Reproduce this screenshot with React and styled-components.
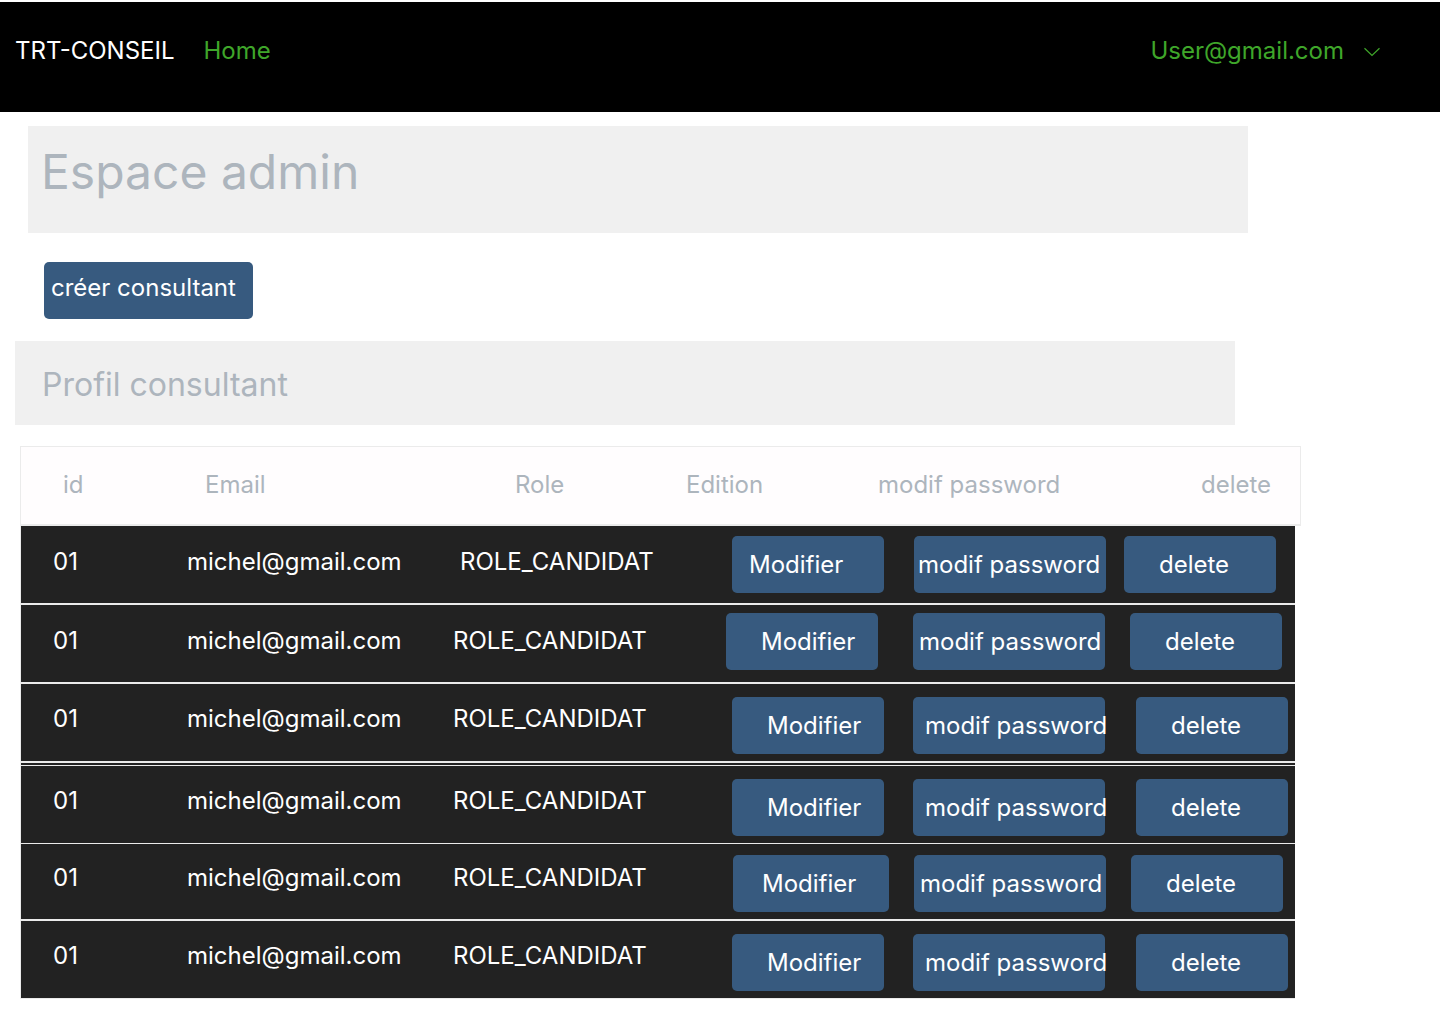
import React from "react";
import styled, { createGlobalStyle, css } from "styled-components";

const color = {
  ink: "#222222",
  primary: "#375a7f",
  muted: "#adb5bd",
  panel: "#f0f0f0",
  line: "#ebebeb",
  link: "#3fa62a",
};

/* Spacing of the texts and action buttons inside a table row. */
const spacing = {
  tight: { top: 10, text: 21, role: 30, edit: 72, editWidth: 152, editPad: 17, pw: 36, pwPad: 4, del: 14 },
  normal: { top: 8, text: 21, role: 23, edit: 66, editWidth: 152, editPad: 35, pw: 35, pwPad: 6, del: 20 },
  compact: { top: 11, text: 19, role: 23, edit: 73, editWidth: 156, editPad: 29, pw: 36, pwPad: 6, del: 21 },
  wide: { top: 13, text: 20, role: 23, edit: 72, editWidth: 152, editPad: 35, pw: 35, pwPad: 12, del: 26 },
};

const GlobalStyle = createGlobalStyle`
  *, *::before, *::after { box-sizing: border-box; }
  body {
    margin: 0;
    background: #ffffff;
    font-family: Inter, "Liberation Sans", sans-serif;
    font-size: 24px;
    line-height: 30px;
  }
  button { font: inherit; cursor: pointer; }
`;

const Page = styled.div`
  padding-top: 2px;
`;

const NavBar = styled.header`
  display: flex;
  align-items: flex-start;
  justify-content: space-between;
  min-height: 110px;
  padding: 34px 59px 34px 15px;
  background: #000000;
`;

const NavLinks = styled.nav`
  display: flex;
  gap: 29px;
`;

const NavLink = styled.a`
  color: ${(p) => (p.$brand ? "#ffffff" : color.link)};
  text-decoration: none;
`;

const UserMenu = styled.button`
  display: flex;
  align-items: center;
  gap: 19px;
  padding: 0;
  border: 0;
  background: none;
  color: ${color.link};
`;

const Main = styled.main`
  display: flex;
  flex-direction: column;
  align-items: flex-start;
  padding: 14px 15px 24px;
`;

const Banner = styled.section`
  width: 100%;
  max-width: 1220px;
  background: ${color.panel};
  ${(p) =>
    p.$sub
      ? css`
          margin-top: 22px;
          padding: 24px 27px 20px;
        `
      : css`
          margin-left: 13px;
          padding: 16px 13px 31px;
        `}
`;

const Title = styled.h1`
  margin: 0;
  color: ${color.muted};
  font-size: 48px;
  font-weight: 400;
  line-height: 60px;
`;

const Subtitle = styled.h2`
  margin: 0;
  color: ${color.muted};
  font-size: 32px;
  font-weight: 400;
  line-height: 40px;
`;

const ActionButton = styled.button`
  position: relative;
  display: block;
  width: ${(p) => p.$width}px;
  height: 57px;
  padding: 0 0 0 ${(p) => p.$pad}px;
  border: 0;
  border-radius: 5px;
  background: ${color.primary};
  color: #ffffff;
  text-align: left;
  white-space: nowrap;
`;

const CreateButton = styled(ActionButton)`
  margin: 29px 0 0 29px;
  padding-bottom: 6px;
`;

const TableWrap = styled.div`
  width: 100%;
  max-width: 1286px;
  margin-top: 21px;
  padding-left: 5px;
`;

const Table = styled.table`
  width: 100%;
  min-width: 1200px;
  table-layout: fixed;
  border-collapse: separate;
  border-spacing: 0;
  text-align: left;
`;

const Col = styled.col`
  width: ${(p) => p.$width}px;
`;

const HeadCell = styled.th`
  height: 80px;
  padding: 0 0 2px ${(p) => p.$pad}px;
  border: solid ${color.line};
  border-width: 1px 0 2px;
  background: #fffdfe;
  color: ${color.muted};
  font-weight: 400;
  white-space: nowrap;

  &:first-child { border-left-width: 1px; }
  &:last-child { border-right-width: 1px; }
`;

const Cell = styled.td`
  height: 79px;
  padding: ${(p) => p.$top}px 0 0 ${(p) => p.$pad}px;
  border-bottom: 2px solid ${color.line};
  background: ${color.ink};
  color: #ffffff;
  vertical-align: top;
  white-space: nowrap;

  &:first-child { border-left: 1px solid ${color.line}; }
`;

const Row = styled.tr`
  ${(p) =>
    p.$rule === "double" &&
    css`
      ${Cell} {
        height: 82px;
        border-bottom-width: 1px;
        box-shadow: inset 0 -2px ${color.ink}, inset 0 -4px ${color.line};
      }
    `}
  ${(p) =>
    p.$rule === "thin" &&
    css`
      ${Cell} {
        height: 78px;
        border-bottom-width: 1px;
      }
    `}
  ${(p) =>
    p.$rule === "short" &&
    css`
      ${Cell} {
        height: 77px;
      }
    `}
  &:last-child ${Cell} {
    height: 78px;
    border-bottom-width: 1px;
  }
`;

const columns = [
  { label: "id", width: 140, pad: 42 },
  { label: "Email", width: 270, pad: 45 },
  { label: "Role", width: 230, pad: 85 },
  { label: "Edition", width: 218, pad: 26 },
  { label: "modif password", width: 232, pad: 0 },
  { label: "delete", width: 185, pad: 91 },
];

const user = { id: "01", email: "michel@gmail.com", role: "ROLE_CANDIDAT" };

const rows = [
  { ...user, space: "tight" },
  { ...user, space: "normal" },
  { ...user, space: "wide", rule: "double" },
  { ...user, space: "wide", rule: "thin" },
  { ...user, space: "compact", rule: "short" },
  { ...user, space: "wide" },
];

function Chevron() {
  return (
    <svg width="18" height="18" viewBox="0 0 18 18" fill="none" aria-hidden="true">
      <path d="M1.5 6.2 9 13.4l7.5-7.2" stroke="currentColor" strokeWidth="1.2" />
    </svg>
  );
}

function ConsultantRow({ item }) {
  const s = spacing[item.space];
  return (
    <Row $rule={item.rule}>
      <Cell $top={s.text} $pad={32}>{item.id}</Cell>
      <Cell $top={s.text} $pad={27}>{item.email}</Cell>
      <Cell $top={s.text} $pad={s.role}>{item.role}</Cell>
      <Cell $top={s.top} $pad={s.edit}>
        <ActionButton type="button" $width={s.editWidth} $pad={s.editPad}>Modifier</ActionButton>
      </Cell>
      <Cell $top={s.top} $pad={s.pw}>
        <ActionButton type="button" $width={192} $pad={s.pwPad}>modif password</ActionButton>
      </Cell>
      <Cell $top={s.top} $pad={s.del}>
        <ActionButton type="button" $width={152} $pad={35}>delete</ActionButton>
      </Cell>
    </Row>
  );
}

export default function App() {
  return (
    <Page>
      <GlobalStyle />
      <NavBar>
        <NavLinks>
          <NavLink href="#" $brand>TRT-CONSEIL</NavLink>
          <NavLink href="#home">Home</NavLink>
        </NavLinks>
        <UserMenu type="button">
          User@gmail.com
          <Chevron />
        </UserMenu>
      </NavBar>
      <Main>
        <Banner>
          <Title>Espace admin</Title>
        </Banner>
        <CreateButton type="button" $width={209} $pad={7}>créer consultant</CreateButton>
        <Banner $sub>
          <Subtitle>Profil consultant</Subtitle>
        </Banner>
        <TableWrap>
          <Table>
            <colgroup>
              {columns.map((c) => (
                <Col key={c.label} $width={c.width} />
              ))}
              <Col $width={6} />
            </colgroup>
            <thead>
              <tr>
                {columns.map((c, i) => (
                  <HeadCell
                    key={c.label}
                    scope="col"
                    $pad={c.pad}
                    colSpan={i === columns.length - 1 ? 2 : 1}
                  >
                    {c.label}
                  </HeadCell>
                ))}
              </tr>
            </thead>
            <tbody>
              {rows.map((item, i) => (
                <ConsultantRow key={i} item={item} />
              ))}
            </tbody>
          </Table>
        </TableWrap>
      </Main>
    </Page>
  );
}
